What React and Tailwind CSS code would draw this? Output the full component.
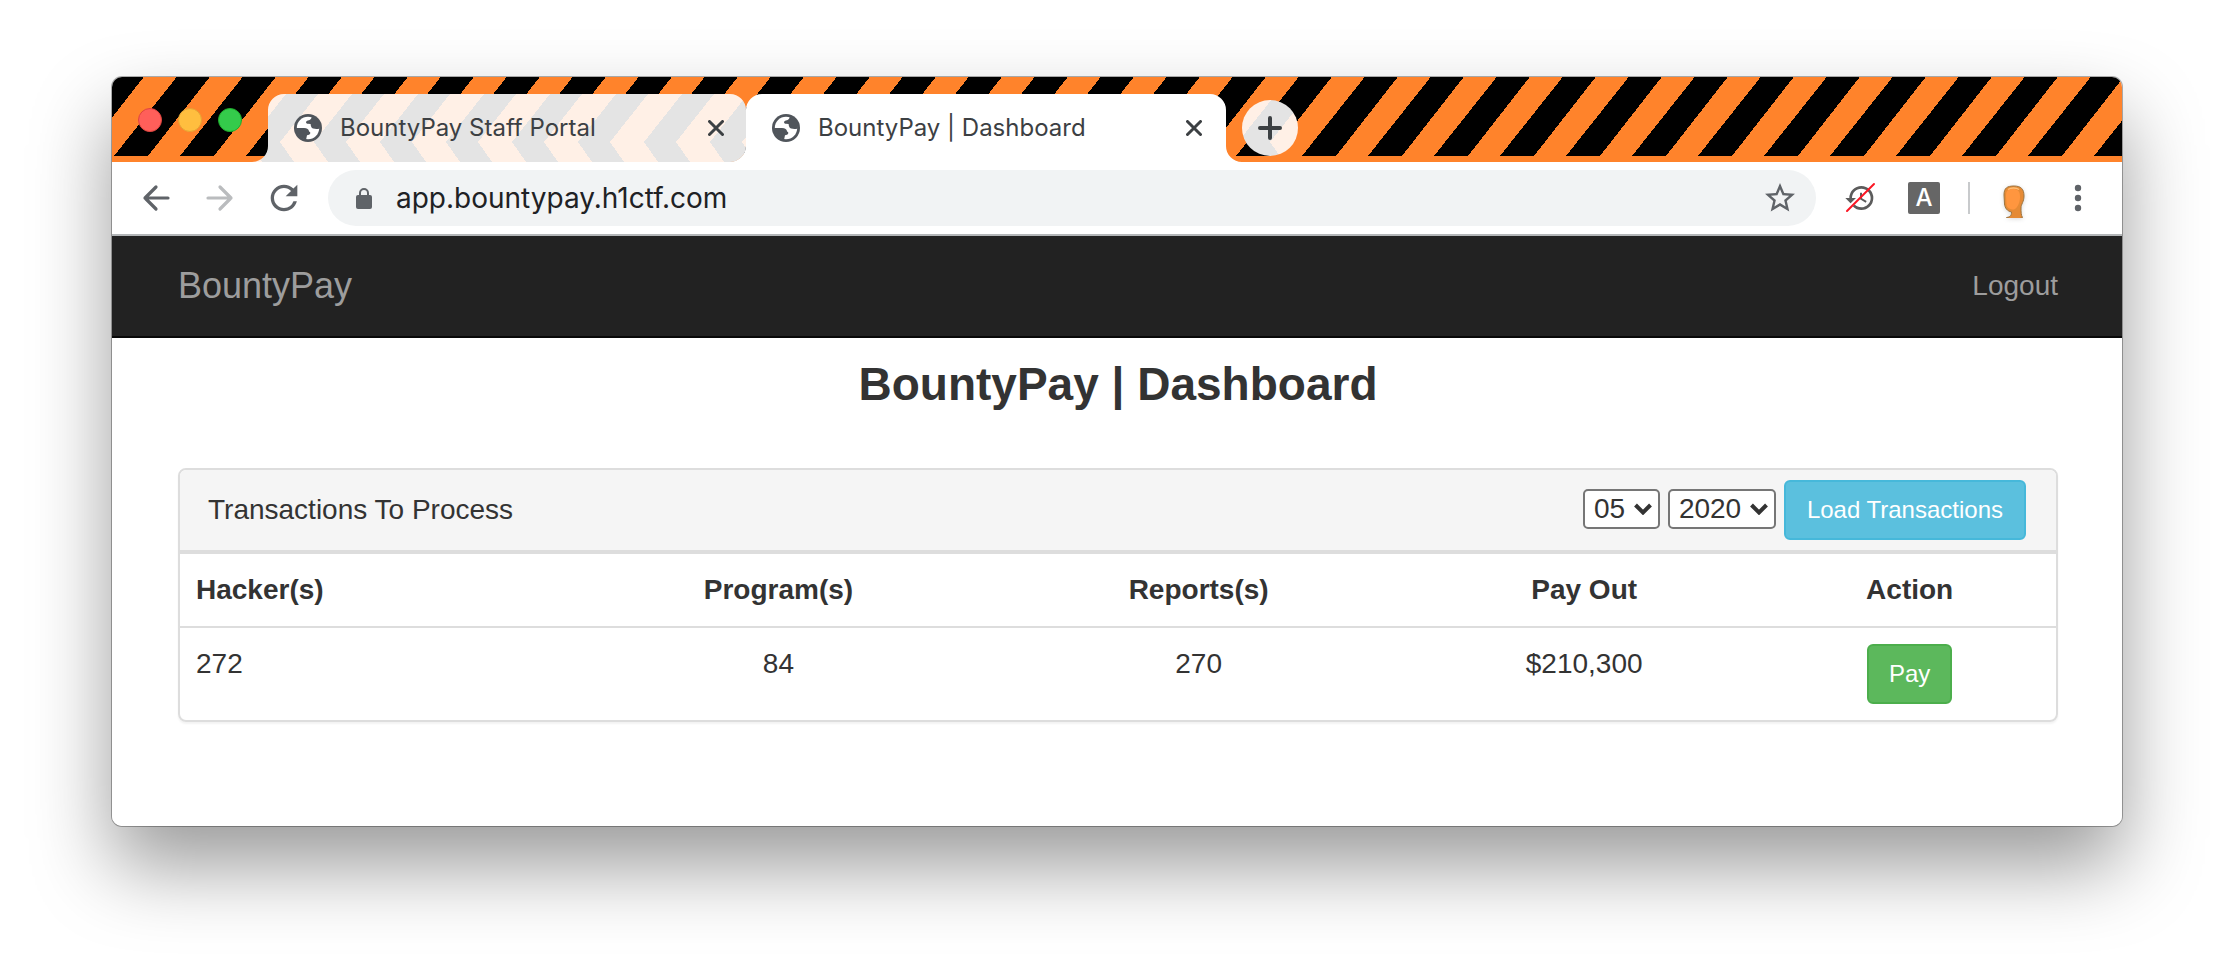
import { MdHistory, MdRefresh, MdStarBorder } from "react-icons/md";

function Globe() {
  return (
    <svg viewBox="0 0 28 28" className="size-7 shrink-0" aria-hidden="true">
      <circle cx="14" cy="14" r="14" fill="#50555b" />
      <circle cx="14" cy="14" r="11.200" fill="#fff" />
      <path
        d="M2 14h8c3 0 5 1.200 5 3.500 1.800.3 1.800 2.900 0 3.200l-2 .5L12 26A12 12 0 0 1 2 14zM17.500 2c.6 2.600-1 4.200-3.500 4.400-2.600.3-2.600 3.200 0 3.400l2.600.2c.2 2 .6 4 2.600 4.600 2.200.6 4.400.6 6.600-.1C26.500 8 23 3.500 17.500 2z"
        fill="#50555b"
      />
    </svg>
  );
}

function Lock() {
  return (
    <svg viewBox="0 0 16 21" className="h-[21px] w-4 shrink-0" aria-hidden="true">
      <rect y="7" width="16" height="14" rx="2" fill="#5f6368" />
      <path d="M4 8V5a4 4 0 0 1 8 0v3" fill="none" stroke="#5f6368" strokeWidth="2" />
    </svg>
  );
}

function Cross() {
  return (
    <svg viewBox="0 0 16 16" className="size-4" fill="none" stroke="#3c4043" strokeWidth="3" strokeLinecap="round" aria-hidden="true">
      <path d="M1.500 1.500l13 13M14.500 1.500l-13 13" />
    </svg>
  );
}

function HazardStripes() {
  return (
    <svg className="absolute inset-0 h-full w-full" shapeRendering="crispEdges" aria-hidden="true">
      <defs>
        <pattern id="hazard" width="66" height="85" patternUnits="userSpaceOnUse">
          <rect width="66" height="85" fill="#ff832b" />
          <path d="M64.700 0h33L36 79H2zM-1.300 0h33L-30 79h-34z" fill="#000" />
        </pattern>
        <pattern id="chevrons" width="66" height="68" patternUnits="userSpaceOnUse">
          <rect width="66" height="68" fill="#e4e4e4" />
          <path d="M66 0h34L62 48l14 20H42L28 48zM0 0h34L-4 48l14 20h-34L-38 48z" fill="#fff0e6" />
        </pattern>
      </defs>
      <rect width="100%" height="100%" fill="url(#hazard)" />
    </svg>
  );
}

function Tab({ title, active }) {
  return (
    <div className={active ? "relative w-[480px] pr-6" : "relative w-[478px] pr-[22px]"}>
      {active ? (
        <svg viewBox="0 0 512 68" className="absolute top-0 -left-4 h-[68px] w-[512px]" aria-hidden="true">
          <path d="M0 68A16 16 0 0 0 16 52V16A16 16 0 0 1 32 0H480A16 16 0 0 1 496 16V52A16 16 0 0 0 512 68z" fill="#fff" />
        </svg>
      ) : (
        <svg viewBox="0 0 494 68" className="absolute top-0 -left-4 z-10 h-[68px] w-[494px]" aria-hidden="true">
          <path d="M478 68A16 16 0 0 0 494 52V68z" fill="#fff" />
          <path d="M0 68A16 16 0 0 0 16 52V16A16 16 0 0 1 32 0H478A16 16 0 0 1 494 16V52A16 16 0 0 1 478 68z" fill="url(#chevrons)" />
        </svg>
      )}
      <div className="relative z-20 flex h-[68px] items-center pl-[26px]">
        <button type="button" className="flex flex-1 items-center gap-[18px] text-left text-[24px] leading-8 text-[#3c4043]">
          <Globe />
          {title}
        </button>
        <button type="button" aria-label="Close tab">
          <Cross />
        </button>
      </div>
    </div>
  );
}

function TabStrip() {
  return (
    <div className="relative h-[85px] overflow-hidden">
      <HazardStripes />
      <div className="relative flex pl-[26px]">
        <div className="flex gap-4 pt-[31px] pr-[26px]">
          <button type="button" aria-label="Close" className="size-6 rounded-full border border-[#e0443e] bg-[#ff5f5a]" />
          <button type="button" aria-label="Minimise" className="size-6 rounded-full border border-[#e5a334] bg-[#ffbe3f]" />
          <button type="button" aria-label="Zoom" className="size-6 rounded-full border border-[#1dad2b] bg-[#34cb4b]" />
        </div>
        <div className="flex pt-[17px]">
          <Tab title="BountyPay Staff Portal" />
          <Tab title="BountyPay | Dashboard" active />
          <button type="button" aria-label="New tab" className="mt-[6px] ml-4 size-14 overflow-hidden rounded-full">
            <svg viewBox="0 6 56 56" className="size-14" aria-hidden="true">
              <rect y="6" width="56" height="56" fill="url(#chevrons)" />
              <path d="M18 34h20M28 24v20" stroke="#3c4043" strokeWidth="4" strokeLinecap="round" />
            </svg>
          </button>
        </div>
      </div>
    </div>
  );
}

function Toolbar() {
  return (
    <div className="flex h-[74px] items-center border-b-2 border-[#b3b6b8] bg-white pr-9 pl-[30px]">
      <button type="button" aria-label="Back" className="mr-9">
        <svg viewBox="0 0 28 28" className="size-7" fill="none" stroke="#5f6368" strokeWidth="3.200" strokeLinecap="round" strokeLinejoin="round" aria-hidden="true">
          <path d="M26 14H3M14 3L3 14l11 11" />
        </svg>
      </button>
      <button type="button" aria-label="Forward" className="mr-[30px]">
        <svg viewBox="0 0 28 28" className="size-7" fill="none" stroke="#babcbe" strokeWidth="3.200" strokeLinecap="round" strokeLinejoin="round" aria-hidden="true">
          <path d="M2 14h23M14 3l11 11-11 11" />
        </svg>
      </button>
      <button type="button" aria-label="Reload" className="mr-6">
        <MdRefresh className="size-10 text-[#5f6368]" />
      </button>
      <div className="flex h-14 flex-1 items-center rounded-full bg-[#f1f3f4] pr-[18px] pl-7">
        <Lock />
        <input
          type="text"
          aria-label="Address"
          defaultValue="app.bountypay.h1ctf.com"
          className="ml-6 min-w-0 flex-1 bg-transparent text-[28px] leading-10 text-[#202124] outline-none"
        />
        <button type="button" aria-label="Bookmark this page">
          <MdStarBorder className="size-9 text-[#5f6368]" />
        </button>
      </div>
      <button type="button" aria-label="History extension" className="relative ml-7">
        <MdHistory className="size-8 text-[#5c5c5c]" />
        <svg viewBox="0 0 32 32" className="absolute inset-0 size-8" aria-hidden="true">
          <path d="M3 29L30 2" stroke="#fb1523" strokeWidth="2" strokeLinecap="round" />
        </svg>
      </button>
      <button
        type="button"
        className="ml-8 flex size-8 items-center justify-center rounded-xs bg-[#666] text-[24px] leading-8 font-medium text-white"
      >
        A
      </button>
      <div className="ml-7 h-8 w-[2px] bg-[#c8cacc]" />
      <button type="button" aria-label="Profile" className="ml-7">
        <svg viewBox="0 0 32 40" className="h-10 w-8 drop-shadow-sm" aria-hidden="true">
          <path
            d="M6 17C6 10 9 8 16 8S26 11 26 18c0 6-3 8-3 12 0 4 0 7 1.500 9.500-4 2-12 2-16 0 4-.5 5-2 5-5.500C9 33 7 30 6.500 26z"
            fill="#e58a35"
            stroke="#9c7440"
            strokeWidth="1"
          />
          <path d="M8 18c0-5.500 2-7 7-7s7 2.500 7 8-2.500 11-6 12.500c-4.500 0-7-1.500-7.500-5z" fill="#ff963f" />
          <path d="M10 11.500c3-2 8-2 11 0" fill="none" stroke="#ffc078" strokeWidth="1.500" />
        </svg>
      </button>
      <button type="button" aria-label="Menu" className="ml-10">
        <svg viewBox="0 0 16 28" className="h-7 w-4" fill="#5f6368" aria-hidden="true">
          <circle cx="8" cy="4" r="3.200" />
          <circle cx="8" cy="14" r="3.200" />
          <circle cx="8" cy="24" r="3.200" />
        </svg>
      </button>
    </div>
  );
}

function Select({ label, value }) {
  return (
    <div className="relative">
      <select
        aria-label={label}
        defaultValue={value}
        className="h-10 appearance-none rounded-[5px] border-2 border-[#767676] bg-white pr-8 pl-[9px] text-[28px] leading-9 text-[#333]"
      >
        <option>{value}</option>
      </select>
      <svg viewBox="0 0 18 12" className="pointer-events-none absolute top-[14px] right-2 h-3 w-[18px]" aria-hidden="true">
        <path d="M1.500 2L9 9.500 16.500 2" fill="none" stroke="#333" strokeWidth="4" />
      </svg>
    </div>
  );
}

function Dashboard() {
  return (
    <div className="bg-white pb-[104px] font-['Liberation_Sans',Arial,sans-serif] text-[28px] leading-10 text-[#333]">
      <nav className="flex h-[102px] items-center justify-between border-b-2 border-[#080808] bg-[#222] pr-16 pl-[66px] text-[#9d9d9d]">
        <a href="#home" className="text-[36px]">BountyPay</a>
        <a href="#logout">Logout</a>
      </nav>
      <main className="pr-16 pl-[66px]">
        <h3 className="mt-5 mb-[58px] text-center text-[46px] leading-[52px] font-bold">BountyPay | Dashboard</h3>
        <section className="overflow-hidden rounded-lg border-2 border-[#ddd] shadow-[0_2px_2px_rgba(0,0,0,0.05)]">
          <div className="flex items-center justify-between border-b-4 border-[#ddd] bg-[#f5f5f5] py-[10px] pr-[30px] pl-7">
            <h4>Transactions To Process</h4>
            <form className="flex items-baseline gap-2">
              <Select label="Month" value="05" />
              <Select label="Year" value="2020" />
              <button type="button" className="rounded-md border-2 border-[#46b8da] bg-[#5bc0de] px-[21px] py-[10px] text-[24px] leading-9 text-white">
                Load Transactions
              </button>
            </form>
          </div>
          <table className="w-full table-fixed border-separate border-spacing-0 text-center">
            <colgroup>
              <col className="w-[20.500%]" />
              <col className="w-[22.800%]" />
              <col className="w-[22%]" />
              <col className="w-[19.100%]" />
              <col className="w-[15.600%]" />
            </colgroup>
            <thead>
              <tr>
                <th className="p-4 text-left">Hacker(s)</th>
                <th className="p-4">Program(s)</th>
                <th className="p-4">Reports(s)</th>
                <th className="p-4">Pay Out</th>
                <th className="p-4">Action</th>
              </tr>
            </thead>
            <tbody className="align-top">
              <tr>
                <td className="border-t-2 border-[#ddd] p-4 text-left">272</td>
                <td className="border-t-2 border-[#ddd] p-4">84</td>
                <td className="border-t-2 border-[#ddd] p-4">270</td>
                <td className="border-t-2 border-[#ddd] p-4">$210,300</td>
                <td className="border-t-2 border-[#ddd] p-4">
                  <button type="button" className="mx-auto block rounded-md border-2 border-[#4cae4c] bg-[#5cb85c] px-5 py-[10px] text-[24px] leading-9 text-white">
                    Pay
                  </button>
                </td>
              </tr>
            </tbody>
          </table>
        </section>
      </main>
    </div>
  );
}

export default function App() {
  return (
    <div className="min-h-screen overflow-hidden bg-white px-28 pt-[77px] pb-[148px] font-[Inter,sans-serif]">
      <div className="overflow-hidden rounded-[10px] shadow-[0_0_0_1px_rgba(0,0,0,0.3),0_40px_80px_rgba(0,0,0,0.4)]">
        <TabStrip />
        <Toolbar />
        <Dashboard />
      </div>
    </div>
  );
}
